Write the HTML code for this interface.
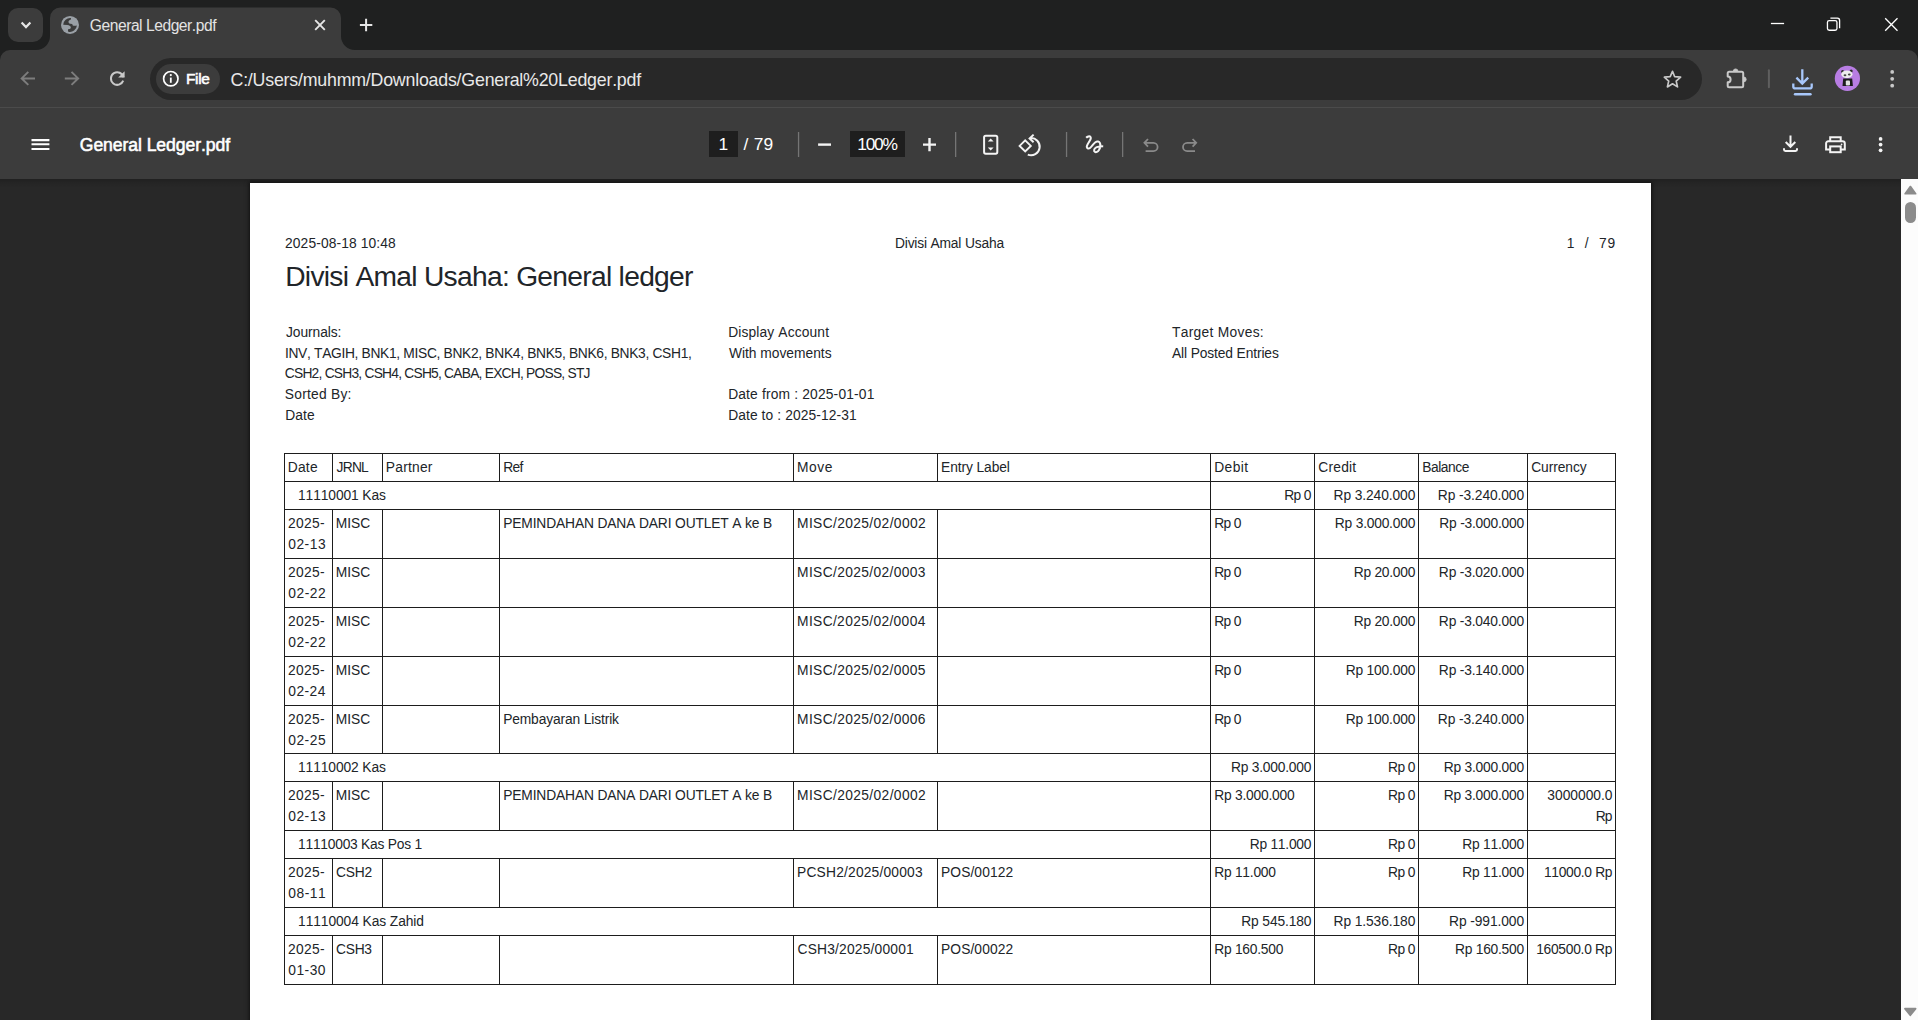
<!DOCTYPE html>
<html lang="en">
<head>
<meta charset="utf-8">
<title>General Ledger.pdf</title>
<style>
html,body{margin:0;padding:0}
body{width:1918px;height:1020px;overflow:hidden;position:relative;background:#282828;
 font-family:"Liberation Sans",sans-serif;font-kerning:none}
.a{position:absolute}
svg{position:absolute;overflow:visible}
.t{position:absolute;white-space:pre;line-height:20px;margin:0;padding:0}
.sb{-webkit-text-stroke:.55px}
#frame{left:0;top:0;width:1918px;height:60px;background:#1f2020}
#tsb{left:8px;top:8px;width:35px;height:34px;border-radius:10px;background:#3c3c3c}
#toolbar{left:0;top:50px;width:1918px;height:58px;background:#3c3c3c;border-radius:10px 10px 0 0}
#omni{left:150px;top:58px;width:1552px;height:42px;border-radius:21px;background:#282828}
#chip{left:156px;top:64px;width:64px;height:30px;border-radius:15px;background:#3c3c3c}
#sep1{left:0;top:107px;width:1918px;height:1px;background:#4b4b4b}
#pdfbar{left:0;top:108px;width:1918px;height:71px;background:#3c3c3c}
#shade{left:0;top:0;width:1901px;height:9px;background:linear-gradient(rgba(0,0,0,.2),rgba(0,0,0,.08) 45%,rgba(0,0,0,0))}
#view{left:0;top:179px;width:1918px;height:841px;background:#282828;overflow:hidden}
#page{left:250px;top:4px;width:1401px;height:900px;background:#fff;box-shadow:0 0 4px 1px rgba(0,0,0,.6)}
#sbar{left:1901px;top:179px;width:17px;height:841px;background:#fcfcfc}
#thumb{left:1905px;top:202px;width:11px;height:21px;border-radius:5.5px;background:#8b8b8b}
.gl{position:absolute;background:#1d1d1d}
</style>
</head>
<body>
<div class="a" id="frame"></div>
<div class="a" id="tsb"></div>
<svg class="a" style="left:0;top:0" width="400" height="52"><path d="M36 50 A14 14 0 0 0 50 36 L50 18 A10.5 10.5 0 0 1 60.5 7.5 L330.5 7.5 A10.5 10.5 0 0 1 341 18 L341 36 A14 14 0 0 0 355 50 L355 52 L36 52 Z" fill="#3c3c3c"/></svg>
<div class="a" id="toolbar"></div>
<div class="a" id="omni"></div>
<div class="a" id="chip"></div>
<div class="a" id="sep1"></div>
<div class="a" id="view"><div class="a" id="shade"></div><div class="a" id="page"></div></div>
<div class="a" id="pdfbar"></div>
<div class="a" id="sbar"></div>
<div class="a" id="thumb"></div>
<svg class="a" style="left:0;top:0" width="1918" height="180" fill="none" stroke-linecap="butt" stroke-linejoin="miter">
<!-- tab search chevron -->
<path d="M21.6 22.6 L26 27.1 L30.4 22.6" stroke="#e6e6e6" stroke-width="2.2"/>
<!-- favicon globe -->
<circle cx="70" cy="24.9" r="9" fill="#9aa0a6"/>
<path d="M63.2 24.7 A7 7 0 0 1 70.9 17.95 L71 19.4 C69.8 19.8 68.9 20.4 68.6 21.2 C68.2 22.4 68.8 23.4 70.3 23.8 L72.1 24.1 C72.6 24.4 72.4 25 72.8 25.4 C73.6 26 75.6 26 76.9 25.4 A7 7 0 0 1 68.3 31.7 C67.8 30.8 67.8 29.8 68.3 29.2 C68.9 28.6 70 29 70.5 28.4 C71.1 27.6 70.9 26.6 70 25.9 C69.2 25.2 68.4 25 67.4 24.9 Z" fill="#3c3c3c"/>
<!-- tab close -->
<path d="M315.2 20.2 L324.8 29.8 M324.8 20.2 L315.2 29.8" stroke="#e6e6e6" stroke-width="1.9"/>
<!-- new tab -->
<path d="M359.9 25 H372.3 M366.1 18.8 V31.2" stroke="#e6e6e6" stroke-width="2"/>
<!-- window controls -->
<path d="M1770.9 23.5 H1784.1" stroke="#ffffff" stroke-width="1.3"/>
<rect x="1827.45" y="20.55" width="9.5" height="9.7" rx="1.8" stroke="#ffffff" stroke-width="1.3"/>
<path d="M1830.4 18.2 H1837.4 A2.2 2.2 0 0 1 1839.6 20.4 V28.2" stroke="#ffffff" stroke-width="1.3"/>
<path d="M1885.2 18.2 L1897.5 30.7 M1897.5 18.2 L1885.2 30.7" stroke="#ffffff" stroke-width="1.3"/>
<!-- nav back / forward / reload -->
<path d="M35 78.4 H22 M28.3 71.9 L21.7 78.4 L28.3 84.9" stroke="#7d7d7d" stroke-width="2"/>
<path d="M64.8 78.4 H77.8 M71.5 71.9 L78.1 78.4 L71.5 84.9" stroke="#7d7d7d" stroke-width="2"/>
<path d="M123.4 77.2 A6.3 6.3 0 1 0 123.2 80.6" stroke="#c9c9c9" stroke-width="2"/>
<path d="M124.6 71.2 V77.6 H118.2 Z" fill="#c9c9c9"/>
<!-- info chip icon -->
<circle cx="170.8" cy="78.7" r="7.2" stroke="#ffffff" stroke-width="1.7"/>
<path d="M170.8 77.6 V82.8" stroke="#ffffff" stroke-width="1.8"/>
<circle cx="170.8" cy="75.1" r="1.1" fill="#ffffff"/>
<!-- star -->
<path d="M1672.5 71.3 L1674.7 76.7 L1680.6 77.2 L1676.2 81.1 L1677.5 86.9 L1672.5 83.8 L1667.4 86.9 L1668.7 81.1 L1664.3 77.2 L1670.2 76.7 Z" stroke="#c9c9c9" stroke-width="1.7" stroke-linejoin="round"/>
<!-- extensions puzzle -->
<path d="M1727.7 76.5 V73.2 A1.5 1.5 0 0 1 1729.2 71.7 H1741.7 A1.5 1.5 0 0 1 1743.2 73.2 V85.7 A1.5 1.5 0 0 1 1741.7 87.2 H1729.2 A1.5 1.5 0 0 1 1727.7 85.7 V82.3 A2.9 2.9 0 0 0 1727.7 76.5 Z" stroke="#c9c9c9" stroke-width="2" stroke-linejoin="round"/>
<path d="M1733.3 71.2 A2.3 2.3 0 0 1 1737.9 71.2 Z" fill="#c9c9c9" stroke="#c9c9c9" stroke-width="0.8"/>
<path d="M1743.8 77 A2.4 2.4 0 0 1 1743.8 81.8 Z" fill="#c9c9c9" stroke="#c9c9c9" stroke-width="0.8"/>
<!-- separator -->
<rect x="1767.9" y="69.3" width="2" height="19" rx="1" fill="#5f5f5f"/>
<!-- download (blue) -->
<path d="M1802.3 69.3 V82.6 M1796.4 77.6 L1802.3 83.5 L1808.2 77.6" stroke="#a8c7fa" stroke-width="2.3"/>
<path d="M1793.3 83.4 V86.4 A2 2 0 0 0 1795.3 88.4 H1809.7 A2 2 0 0 0 1811.7 86.4 V83.4" stroke="#a8c7fa" stroke-width="2.3"/>
<rect x="1793.8" y="93" width="17.9" height="2.6" rx="1.3" fill="#a8c7fa"/>
<!-- avatar -->
<circle cx="1847.4" cy="78.4" r="12.6" fill="#b87de3"/>
<circle cx="1842.6" cy="71.6" r="1.5" fill="#2a2a2a"/><circle cx="1851.2" cy="71" r="1.5" fill="#2a2a2a"/>
<ellipse cx="1846.9" cy="74.3" rx="5.6" ry="3.9" fill="#ededed"/>
<ellipse cx="1845" cy="75.3" rx="1.4" ry="1" fill="#444"/><ellipse cx="1849.3" cy="74.4" rx="1.4" ry="1" fill="#444"/>
<path d="M1843.2 78.6 H1852.2 L1852.9 85.9 H1842.5 Z" fill="#1c1c1c"/>
<rect x="1845.8" y="80.4" width="4.2" height="5.2" rx="1" fill="#e2e2e2"/>
<!-- chrome menu dots -->
<circle cx="1892.2" cy="71.9" r="1.9" fill="#c9c9c9"/><circle cx="1892.2" cy="78.8" r="1.9" fill="#c9c9c9"/><circle cx="1892.2" cy="85.7" r="1.9" fill="#c9c9c9"/>

<!-- ===== PDF toolbar ===== -->
<path d="M31.5 140.1 H49.4 M31.5 144.3 H49.4 M31.5 149 H49.4" stroke="#ffffff" stroke-width="2.1"/>
<rect x="709" y="131" width="29" height="26" fill="#1e1e1e"/>
<rect x="850" y="131" width="55" height="26" fill="#1e1e1e"/>
<rect x="797.9" y="132" width="1.3" height="25" fill="#757575"/>
<rect x="955" y="132" width="1.3" height="25" fill="#757575"/>
<rect x="1065.9" y="132" width="1.3" height="25" fill="#757575"/>
<rect x="1122" y="132" width="1.3" height="25" fill="#757575"/>
<path d="M818.1 144.6 H831" stroke="#f4f4f4" stroke-width="2.4"/>
<path d="M923 144.6 H936 M929.5 138 V151.2" stroke="#f4f4f4" stroke-width="2.4"/>
<!-- fit to page -->
<rect x="984.1" y="135.7" width="13.2" height="18" rx="1.6" stroke="#f4f4f4" stroke-width="2"/>
<path d="M990.7 138.4 L993.6 141.6 H987.8 Z M990.7 150.6 L993.6 147.4 H987.8 Z" fill="#f4f4f4"/>
<!-- rotate ccw -->
<path d="M1030.2 138.1 A8.6 8.6 0 1 1 1027.8 154.6" stroke="#f4f4f4" stroke-width="2"/>
<path d="M1033.6 134.6 L1029.6 138.4 L1033.6 142.2" stroke="#f4f4f4" stroke-width="2"/>
<path d="M1025.2 140.3 L1030.8 145.9 L1025.2 151.5 L1019.6 145.9 Z" stroke="#f4f4f4" stroke-width="1.9"/>
<!-- draw / annotate squiggle -->
<path d="M1086.2 137.8 C1087.3 136.6 1089.4 135.8 1090.4 136.8 C1091.4 137.9 1090.5 139.6 1089.6 141 C1088.3 143.2 1086.4 145.6 1086.8 147 C1087.2 148.6 1088.6 149 1090 148 C1092 146.6 1093.2 143.8 1095.4 142.2 C1097.2 140.9 1099.2 141.4 1100 143.2 C1100.8 145.2 1100.3 148 1099 150 C1097.8 151.8 1096 152.8 1094.8 151.8 C1093.6 150.8 1094 148.9 1095.6 147.8 C1097.4 146.5 1100 146.2 1103.2 146.2" stroke="#f4f4f4" stroke-width="2" stroke-linecap="butt" stroke-linejoin="round"/>
<!-- undo / redo (disabled) -->
<path d="M1148 139 L1144.4 142.8 L1148 146.6 M1144.6 142.8 H1153.4 A4.2 4.2 0 0 1 1153.4 151.2 H1145.6" stroke="#8a8a8a" stroke-width="1.8"/>
<path d="M1192.6 139 L1196.2 142.8 L1192.6 146.6 M1196 142.8 H1187.2 A4.2 4.2 0 0 0 1187.2 151.2 H1195" stroke="#8a8a8a" stroke-width="1.8"/>
<!-- download -->
<path d="M1790.5 135.6 V146.6 M1785.7 142 L1790.5 146.8 L1795.3 142" stroke="#f4f4f4" stroke-width="2"/>
<path d="M1784 148.2 V149.6 A1.4 1.4 0 0 0 1785.4 151 H1795.6 A1.4 1.4 0 0 0 1797 149.6 V148.2" stroke="#f4f4f4" stroke-width="2"/>
<!-- print -->
<path d="M1830.2 141.2 V137.2 H1840.7 V141.2" stroke="#f4f4f4" stroke-width="2"/>
<path d="M1830.2 149.6 H1826.1 V143.4 A2.2 2.2 0 0 1 1828.3 141.2 H1842.6 A2.2 2.2 0 0 1 1844.8 143.4 V149.6 H1840.7" stroke="#f4f4f4" stroke-width="2"/>
<rect x="1830.2" y="146.4" width="10.5" height="5.8" stroke="#f4f4f4" stroke-width="2"/>
<circle cx="1841.6" cy="144.3" r="0.9" fill="#f4f4f4"/>
<!-- pdf menu dots -->
<circle cx="1880.6" cy="138.9" r="1.85" fill="#f4f4f4"/><circle cx="1880.6" cy="144.6" r="1.85" fill="#f4f4f4"/><circle cx="1880.6" cy="150.3" r="1.85" fill="#f4f4f4"/>
</svg>
<svg class="a" style="left:1901px;top:179px" width="17" height="841">
<path d="M9.4 7.6 L14.6 14.7 H4.2 Z" fill="#8b8b8b" stroke="#8b8b8b" stroke-width="1.8" stroke-linejoin="round"/>
<path d="M9.3 836.2 L14.6 829.6 H4 Z" fill="#8b8b8b" stroke="#8b8b8b" stroke-width="1.8" stroke-linejoin="round"/>
</svg>

<div class="gl" style="left:284px;top:453px;width:1332px;height:1px"></div>
<div class="gl" style="left:284px;top:481px;width:1332px;height:1px"></div>
<div class="gl" style="left:284px;top:509px;width:1332px;height:1px"></div>
<div class="gl" style="left:284px;top:558px;width:1332px;height:1px"></div>
<div class="gl" style="left:284px;top:607px;width:1332px;height:1px"></div>
<div class="gl" style="left:284px;top:656px;width:1332px;height:1px"></div>
<div class="gl" style="left:284px;top:705px;width:1332px;height:1px"></div>
<div class="gl" style="left:284px;top:753px;width:1332px;height:1px"></div>
<div class="gl" style="left:284px;top:781px;width:1332px;height:1px"></div>
<div class="gl" style="left:284px;top:830px;width:1332px;height:1px"></div>
<div class="gl" style="left:284px;top:858px;width:1332px;height:1px"></div>
<div class="gl" style="left:284px;top:907px;width:1332px;height:1px"></div>
<div class="gl" style="left:284px;top:935px;width:1332px;height:1px"></div>
<div class="gl" style="left:284px;top:984px;width:1332px;height:1px"></div>
<div class="gl" style="left:284px;top:453px;width:1px;height:29px"></div>
<div class="gl" style="left:332px;top:453px;width:1px;height:29px"></div>
<div class="gl" style="left:382px;top:453px;width:1px;height:29px"></div>
<div class="gl" style="left:499px;top:453px;width:1px;height:29px"></div>
<div class="gl" style="left:793px;top:453px;width:1px;height:29px"></div>
<div class="gl" style="left:937px;top:453px;width:1px;height:29px"></div>
<div class="gl" style="left:1210px;top:453px;width:1px;height:29px"></div>
<div class="gl" style="left:1314px;top:453px;width:1px;height:29px"></div>
<div class="gl" style="left:1418px;top:453px;width:1px;height:29px"></div>
<div class="gl" style="left:1527px;top:453px;width:1px;height:29px"></div>
<div class="gl" style="left:1615px;top:453px;width:1px;height:29px"></div>
<div class="gl" style="left:284px;top:481px;width:1px;height:29px"></div>
<div class="gl" style="left:1210px;top:481px;width:1px;height:29px"></div>
<div class="gl" style="left:1314px;top:481px;width:1px;height:29px"></div>
<div class="gl" style="left:1418px;top:481px;width:1px;height:29px"></div>
<div class="gl" style="left:1527px;top:481px;width:1px;height:29px"></div>
<div class="gl" style="left:1615px;top:481px;width:1px;height:29px"></div>
<div class="gl" style="left:284px;top:509px;width:1px;height:50px"></div>
<div class="gl" style="left:332px;top:509px;width:1px;height:50px"></div>
<div class="gl" style="left:382px;top:509px;width:1px;height:50px"></div>
<div class="gl" style="left:499px;top:509px;width:1px;height:50px"></div>
<div class="gl" style="left:793px;top:509px;width:1px;height:50px"></div>
<div class="gl" style="left:937px;top:509px;width:1px;height:50px"></div>
<div class="gl" style="left:1210px;top:509px;width:1px;height:50px"></div>
<div class="gl" style="left:1314px;top:509px;width:1px;height:50px"></div>
<div class="gl" style="left:1418px;top:509px;width:1px;height:50px"></div>
<div class="gl" style="left:1527px;top:509px;width:1px;height:50px"></div>
<div class="gl" style="left:1615px;top:509px;width:1px;height:50px"></div>
<div class="gl" style="left:284px;top:558px;width:1px;height:50px"></div>
<div class="gl" style="left:332px;top:558px;width:1px;height:50px"></div>
<div class="gl" style="left:382px;top:558px;width:1px;height:50px"></div>
<div class="gl" style="left:499px;top:558px;width:1px;height:50px"></div>
<div class="gl" style="left:793px;top:558px;width:1px;height:50px"></div>
<div class="gl" style="left:937px;top:558px;width:1px;height:50px"></div>
<div class="gl" style="left:1210px;top:558px;width:1px;height:50px"></div>
<div class="gl" style="left:1314px;top:558px;width:1px;height:50px"></div>
<div class="gl" style="left:1418px;top:558px;width:1px;height:50px"></div>
<div class="gl" style="left:1527px;top:558px;width:1px;height:50px"></div>
<div class="gl" style="left:1615px;top:558px;width:1px;height:50px"></div>
<div class="gl" style="left:284px;top:607px;width:1px;height:50px"></div>
<div class="gl" style="left:332px;top:607px;width:1px;height:50px"></div>
<div class="gl" style="left:382px;top:607px;width:1px;height:50px"></div>
<div class="gl" style="left:499px;top:607px;width:1px;height:50px"></div>
<div class="gl" style="left:793px;top:607px;width:1px;height:50px"></div>
<div class="gl" style="left:937px;top:607px;width:1px;height:50px"></div>
<div class="gl" style="left:1210px;top:607px;width:1px;height:50px"></div>
<div class="gl" style="left:1314px;top:607px;width:1px;height:50px"></div>
<div class="gl" style="left:1418px;top:607px;width:1px;height:50px"></div>
<div class="gl" style="left:1527px;top:607px;width:1px;height:50px"></div>
<div class="gl" style="left:1615px;top:607px;width:1px;height:50px"></div>
<div class="gl" style="left:284px;top:656px;width:1px;height:50px"></div>
<div class="gl" style="left:332px;top:656px;width:1px;height:50px"></div>
<div class="gl" style="left:382px;top:656px;width:1px;height:50px"></div>
<div class="gl" style="left:499px;top:656px;width:1px;height:50px"></div>
<div class="gl" style="left:793px;top:656px;width:1px;height:50px"></div>
<div class="gl" style="left:937px;top:656px;width:1px;height:50px"></div>
<div class="gl" style="left:1210px;top:656px;width:1px;height:50px"></div>
<div class="gl" style="left:1314px;top:656px;width:1px;height:50px"></div>
<div class="gl" style="left:1418px;top:656px;width:1px;height:50px"></div>
<div class="gl" style="left:1527px;top:656px;width:1px;height:50px"></div>
<div class="gl" style="left:1615px;top:656px;width:1px;height:50px"></div>
<div class="gl" style="left:284px;top:705px;width:1px;height:49px"></div>
<div class="gl" style="left:332px;top:705px;width:1px;height:49px"></div>
<div class="gl" style="left:382px;top:705px;width:1px;height:49px"></div>
<div class="gl" style="left:499px;top:705px;width:1px;height:49px"></div>
<div class="gl" style="left:793px;top:705px;width:1px;height:49px"></div>
<div class="gl" style="left:937px;top:705px;width:1px;height:49px"></div>
<div class="gl" style="left:1210px;top:705px;width:1px;height:49px"></div>
<div class="gl" style="left:1314px;top:705px;width:1px;height:49px"></div>
<div class="gl" style="left:1418px;top:705px;width:1px;height:49px"></div>
<div class="gl" style="left:1527px;top:705px;width:1px;height:49px"></div>
<div class="gl" style="left:1615px;top:705px;width:1px;height:49px"></div>
<div class="gl" style="left:284px;top:753px;width:1px;height:29px"></div>
<div class="gl" style="left:1210px;top:753px;width:1px;height:29px"></div>
<div class="gl" style="left:1314px;top:753px;width:1px;height:29px"></div>
<div class="gl" style="left:1418px;top:753px;width:1px;height:29px"></div>
<div class="gl" style="left:1527px;top:753px;width:1px;height:29px"></div>
<div class="gl" style="left:1615px;top:753px;width:1px;height:29px"></div>
<div class="gl" style="left:284px;top:781px;width:1px;height:50px"></div>
<div class="gl" style="left:332px;top:781px;width:1px;height:50px"></div>
<div class="gl" style="left:382px;top:781px;width:1px;height:50px"></div>
<div class="gl" style="left:499px;top:781px;width:1px;height:50px"></div>
<div class="gl" style="left:793px;top:781px;width:1px;height:50px"></div>
<div class="gl" style="left:937px;top:781px;width:1px;height:50px"></div>
<div class="gl" style="left:1210px;top:781px;width:1px;height:50px"></div>
<div class="gl" style="left:1314px;top:781px;width:1px;height:50px"></div>
<div class="gl" style="left:1418px;top:781px;width:1px;height:50px"></div>
<div class="gl" style="left:1527px;top:781px;width:1px;height:50px"></div>
<div class="gl" style="left:1615px;top:781px;width:1px;height:50px"></div>
<div class="gl" style="left:284px;top:830px;width:1px;height:29px"></div>
<div class="gl" style="left:1210px;top:830px;width:1px;height:29px"></div>
<div class="gl" style="left:1314px;top:830px;width:1px;height:29px"></div>
<div class="gl" style="left:1418px;top:830px;width:1px;height:29px"></div>
<div class="gl" style="left:1527px;top:830px;width:1px;height:29px"></div>
<div class="gl" style="left:1615px;top:830px;width:1px;height:29px"></div>
<div class="gl" style="left:284px;top:858px;width:1px;height:50px"></div>
<div class="gl" style="left:332px;top:858px;width:1px;height:50px"></div>
<div class="gl" style="left:382px;top:858px;width:1px;height:50px"></div>
<div class="gl" style="left:499px;top:858px;width:1px;height:50px"></div>
<div class="gl" style="left:793px;top:858px;width:1px;height:50px"></div>
<div class="gl" style="left:937px;top:858px;width:1px;height:50px"></div>
<div class="gl" style="left:1210px;top:858px;width:1px;height:50px"></div>
<div class="gl" style="left:1314px;top:858px;width:1px;height:50px"></div>
<div class="gl" style="left:1418px;top:858px;width:1px;height:50px"></div>
<div class="gl" style="left:1527px;top:858px;width:1px;height:50px"></div>
<div class="gl" style="left:1615px;top:858px;width:1px;height:50px"></div>
<div class="gl" style="left:284px;top:907px;width:1px;height:29px"></div>
<div class="gl" style="left:1210px;top:907px;width:1px;height:29px"></div>
<div class="gl" style="left:1314px;top:907px;width:1px;height:29px"></div>
<div class="gl" style="left:1418px;top:907px;width:1px;height:29px"></div>
<div class="gl" style="left:1527px;top:907px;width:1px;height:29px"></div>
<div class="gl" style="left:1615px;top:907px;width:1px;height:29px"></div>
<div class="gl" style="left:284px;top:935px;width:1px;height:50px"></div>
<div class="gl" style="left:332px;top:935px;width:1px;height:50px"></div>
<div class="gl" style="left:382px;top:935px;width:1px;height:50px"></div>
<div class="gl" style="left:499px;top:935px;width:1px;height:50px"></div>
<div class="gl" style="left:793px;top:935px;width:1px;height:50px"></div>
<div class="gl" style="left:937px;top:935px;width:1px;height:50px"></div>
<div class="gl" style="left:1210px;top:935px;width:1px;height:50px"></div>
<div class="gl" style="left:1314px;top:935px;width:1px;height:50px"></div>
<div class="gl" style="left:1418px;top:935px;width:1px;height:50px"></div>
<div class="gl" style="left:1527px;top:935px;width:1px;height:50px"></div>
<div class="gl" style="left:1615px;top:935px;width:1px;height:50px"></div>
<span class="t" style="left:285.06px;top:234.00px;font-size:13.8px;color:#212529;letter-spacing:0.114px">2025-08-18 10:48</span>
<span class="t" style="left:894.97px;top:234.00px;font-size:13.8px;color:#212529;letter-spacing:-0.176px">Divisi Amal Usaha</span>
<span class="t" style="left:1566.72px;top:234.00px;font-size:13.8px;color:#212529">1</span>
<span class="t" style="left:1584.78px;top:234.00px;font-size:13.8px;color:#212529">/</span>
<span class="t" style="left:1598.99px;top:234.00px;font-size:13.8px;color:#212529;letter-spacing:0.902px">79</span>
<span class="t" style="left:285.19px;top:266.00px;font-size:28.2px;color:#212529;letter-spacing:-0.705px">Divisi Amal Usaha: General ledger</span>
<span class="t" style="left:286.04px;top:323.00px;font-size:13.8px;color:#212529;letter-spacing:-0.071px">Journals:</span>
<span class="t" style="left:284.98px;top:344.00px;font-size:13.8px;color:#212529;letter-spacing:-0.322px">INV, TAGIH, BNK1, MISC, BNK2, BNK4, BNK5, BNK6, BNK3, CSH1,</span>
<span class="t" style="left:284.80px;top:364.00px;font-size:13.8px;color:#212529;letter-spacing:-0.773px">CSH2, CSH3, CSH4, CSH5, CABA, EXCH, POSS, STJ</span>
<span class="t" style="left:284.87px;top:385.00px;font-size:13.8px;color:#212529;letter-spacing:0.229px">Sorted By:</span>
<span class="t" style="left:285.13px;top:406.00px;font-size:13.8px;color:#212529;letter-spacing:0.176px">Date</span>
<span class="t" style="left:728.13px;top:323.00px;font-size:13.8px;color:#212529;letter-spacing:0.138px">Display Account</span>
<span class="t" style="left:728.94px;top:344.00px;font-size:13.8px;color:#212529;letter-spacing:-0.007px">With movements</span>
<span class="t" style="left:728.13px;top:385.00px;font-size:13.8px;color:#212529;letter-spacing:0.171px">Date from : 2025-01-01</span>
<span class="t" style="left:728.13px;top:406.00px;font-size:13.8px;color:#212529;letter-spacing:0.104px">Date to : 2025-12-31</span>
<span class="t" style="left:1172.09px;top:323.00px;font-size:13.8px;color:#212529;letter-spacing:0.282px">Target Moves:</span>
<span class="t" style="left:1171.97px;top:344.00px;font-size:13.8px;color:#212529;letter-spacing:-0.122px">All Posted Entries</span>
<span class="t" style="left:287.67px;top:458.00px;font-size:13.8px;color:#212529;letter-spacing:0.280px">Date</span>
<span class="t" style="left:336.58px;top:458.00px;font-size:13.8px;color:#212529;letter-spacing:-0.775px">JRNL</span>
<span class="t" style="left:385.87px;top:458.00px;font-size:13.8px;color:#212529;letter-spacing:0.219px">Partner</span>
<span class="t" style="left:503.17px;top:458.00px;font-size:13.8px;color:#212529;letter-spacing:-0.686px">Ref</span>
<span class="t" style="left:797.07px;top:458.00px;font-size:13.8px;color:#212529;letter-spacing:0.548px">Move</span>
<span class="t" style="left:941.07px;top:458.00px;font-size:13.8px;color:#212529;letter-spacing:-0.094px">Entry Label</span>
<span class="t" style="left:1214.17px;top:458.00px;font-size:13.8px;color:#212529;letter-spacing:0.416px">Debit</span>
<span class="t" style="left:1318.20px;top:458.00px;font-size:13.8px;color:#212529;letter-spacing:0.238px">Credit</span>
<span class="t" style="left:1422.27px;top:458.00px;font-size:13.8px;color:#212529;letter-spacing:-0.452px">Balance</span>
<span class="t" style="left:1531.20px;top:458.00px;font-size:13.8px;color:#212529;letter-spacing:-0.065px">Currency</span>
<span class="t" style="left:298.05px;top:486.00px;font-size:13.8px;color:#212529;letter-spacing:-0.105px">11110001 Kas</span>
<span class="t" style="left:1284.17px;top:486.00px;font-size:13.8px;color:#212529;letter-spacing:-0.628px">Rp 0</span>
<span class="t" style="left:1333.57px;top:486.00px;font-size:13.8px;color:#212529;letter-spacing:-0.099px">Rp 3.240.000</span>
<span class="t" style="left:1437.87px;top:486.00px;font-size:13.8px;color:#212529;letter-spacing:-0.099px">Rp -3.240.000</span>
<span class="t" style="left:288.11px;top:514.00px;font-size:13.8px;color:#212529;letter-spacing:0.278px">2025-</span>
<span class="t" style="left:288.26px;top:535.00px;font-size:13.8px;color:#212529;letter-spacing:0.512px">02-13</span>
<span class="t" style="left:335.67px;top:514.00px;font-size:13.8px;color:#212529;letter-spacing:0.053px">MISC</span>
<span class="t" style="left:503.17px;top:514.00px;font-size:13.8px;color:#212529;letter-spacing:-0.138px">PEMINDAHAN DANA DARI OUTLET A ke B</span>
<span class="t" style="left:797.07px;top:514.00px;font-size:13.8px;color:#212529;letter-spacing:0.365px">MISC/2025/02/0002</span>
<span class="t" style="left:1214.17px;top:514.00px;font-size:13.8px;color:#212529;letter-spacing:-0.628px">Rp 0</span>
<span class="t" style="left:1334.87px;top:514.00px;font-size:13.8px;color:#212529;letter-spacing:-0.217px">Rp 3.000.000</span>
<span class="t" style="left:1439.37px;top:514.00px;font-size:13.8px;color:#212529;letter-spacing:-0.224px">Rp -3.000.000</span>
<span class="t" style="left:288.11px;top:563.00px;font-size:13.8px;color:#212529;letter-spacing:0.278px">2025-</span>
<span class="t" style="left:288.26px;top:584.00px;font-size:13.8px;color:#212529;letter-spacing:0.534px">02-22</span>
<span class="t" style="left:335.67px;top:563.00px;font-size:13.8px;color:#212529;letter-spacing:0.053px">MISC</span>
<span class="t" style="left:797.07px;top:563.00px;font-size:13.8px;color:#212529;letter-spacing:0.360px">MISC/2025/02/0003</span>
<span class="t" style="left:1214.17px;top:563.00px;font-size:13.8px;color:#212529;letter-spacing:-0.628px">Rp 0</span>
<span class="t" style="left:1353.77px;top:563.00px;font-size:13.8px;color:#212529;letter-spacing:-0.263px">Rp 20.000</span>
<span class="t" style="left:1438.87px;top:563.00px;font-size:13.8px;color:#212529;letter-spacing:-0.182px">Rp -3.020.000</span>
<span class="t" style="left:288.11px;top:612.00px;font-size:13.8px;color:#212529;letter-spacing:0.278px">2025-</span>
<span class="t" style="left:288.26px;top:633.00px;font-size:13.8px;color:#212529;letter-spacing:0.534px">02-22</span>
<span class="t" style="left:335.67px;top:612.00px;font-size:13.8px;color:#212529;letter-spacing:0.053px">MISC</span>
<span class="t" style="left:797.07px;top:612.00px;font-size:13.8px;color:#212529;letter-spacing:0.347px">MISC/2025/02/0004</span>
<span class="t" style="left:1214.17px;top:612.00px;font-size:13.8px;color:#212529;letter-spacing:-0.628px">Rp 0</span>
<span class="t" style="left:1353.77px;top:612.00px;font-size:13.8px;color:#212529;letter-spacing:-0.263px">Rp 20.000</span>
<span class="t" style="left:1438.87px;top:612.00px;font-size:13.8px;color:#212529;letter-spacing:-0.182px">Rp -3.040.000</span>
<span class="t" style="left:288.11px;top:661.00px;font-size:13.8px;color:#212529;letter-spacing:0.278px">2025-</span>
<span class="t" style="left:288.26px;top:682.00px;font-size:13.8px;color:#212529;letter-spacing:0.462px">02-24</span>
<span class="t" style="left:335.67px;top:661.00px;font-size:13.8px;color:#212529;letter-spacing:0.053px">MISC</span>
<span class="t" style="left:797.07px;top:661.00px;font-size:13.8px;color:#212529;letter-spacing:0.358px">MISC/2025/02/0005</span>
<span class="t" style="left:1214.17px;top:661.00px;font-size:13.8px;color:#212529;letter-spacing:-0.628px">Rp 0</span>
<span class="t" style="left:1345.67px;top:661.00px;font-size:13.8px;color:#212529;letter-spacing:-0.186px">Rp 100.000</span>
<span class="t" style="left:1438.87px;top:661.00px;font-size:13.8px;color:#212529;letter-spacing:-0.182px">Rp -3.140.000</span>
<span class="t" style="left:288.11px;top:710.00px;font-size:13.8px;color:#212529;letter-spacing:0.278px">2025-</span>
<span class="t" style="left:288.26px;top:731.00px;font-size:13.8px;color:#212529;letter-spacing:0.505px">02-25</span>
<span class="t" style="left:335.67px;top:710.00px;font-size:13.8px;color:#212529;letter-spacing:0.053px">MISC</span>
<span class="t" style="left:503.17px;top:710.00px;font-size:13.8px;color:#212529;letter-spacing:-0.134px">Pembayaran Listrik</span>
<span class="t" style="left:797.07px;top:710.00px;font-size:13.8px;color:#212529;letter-spacing:0.360px">MISC/2025/02/0006</span>
<span class="t" style="left:1214.17px;top:710.00px;font-size:13.8px;color:#212529;letter-spacing:-0.628px">Rp 0</span>
<span class="t" style="left:1345.67px;top:710.00px;font-size:13.8px;color:#212529;letter-spacing:-0.186px">Rp 100.000</span>
<span class="t" style="left:1437.87px;top:710.00px;font-size:13.8px;color:#212529;letter-spacing:-0.099px">Rp -3.240.000</span>
<span class="t" style="left:298.05px;top:758.00px;font-size:13.8px;color:#212529;letter-spacing:-0.105px">11110002 Kas</span>
<span class="t" style="left:1230.97px;top:758.00px;font-size:13.8px;color:#212529;letter-spacing:-0.217px">Rp 3.000.000</span>
<span class="t" style="left:1388.07px;top:758.00px;font-size:13.8px;color:#212529;letter-spacing:-0.628px">Rp 0</span>
<span class="t" style="left:1443.67px;top:758.00px;font-size:13.8px;color:#212529;letter-spacing:-0.217px">Rp 3.000.000</span>
<span class="t" style="left:288.11px;top:786.00px;font-size:13.8px;color:#212529;letter-spacing:0.278px">2025-</span>
<span class="t" style="left:288.26px;top:807.00px;font-size:13.8px;color:#212529;letter-spacing:0.512px">02-13</span>
<span class="t" style="left:335.67px;top:786.00px;font-size:13.8px;color:#212529;letter-spacing:0.053px">MISC</span>
<span class="t" style="left:503.17px;top:786.00px;font-size:13.8px;color:#212529;letter-spacing:-0.138px">PEMINDAHAN DANA DARI OUTLET A ke B</span>
<span class="t" style="left:797.07px;top:786.00px;font-size:13.8px;color:#212529;letter-spacing:0.365px">MISC/2025/02/0002</span>
<span class="t" style="left:1214.17px;top:786.00px;font-size:13.8px;color:#212529;letter-spacing:-0.217px">Rp 3.000.000</span>
<span class="t" style="left:1388.07px;top:786.00px;font-size:13.8px;color:#212529;letter-spacing:-0.628px">Rp 0</span>
<span class="t" style="left:1443.67px;top:786.00px;font-size:13.8px;color:#212529;letter-spacing:-0.217px">Rp 3.000.000</span>
<span class="t" style="left:1547.37px;top:786.00px;font-size:13.8px;color:#212529;letter-spacing:-0.019px">3000000.0</span>
<span class="t" style="left:1595.87px;top:807.00px;font-size:13.8px;color:#212529;letter-spacing:-1.029px">Rp</span>
<span class="t" style="left:298.05px;top:835.00px;font-size:13.8px;color:#212529;letter-spacing:-0.240px">11110003 Kas Pos 1</span>
<span class="t" style="left:1249.67px;top:835.00px;font-size:13.8px;color:#212529;letter-spacing:-0.238px">Rp 11.000</span>
<span class="t" style="left:1388.07px;top:835.00px;font-size:13.8px;color:#212529;letter-spacing:-0.628px">Rp 0</span>
<span class="t" style="left:1462.37px;top:835.00px;font-size:13.8px;color:#212529;letter-spacing:-0.238px">Rp 11.000</span>
<span class="t" style="left:288.11px;top:863.00px;font-size:13.8px;color:#212529;letter-spacing:0.278px">2025-</span>
<span class="t" style="left:288.26px;top:884.00px;font-size:13.8px;color:#212529;letter-spacing:0.529px">08-11</span>
<span class="t" style="left:336.10px;top:863.00px;font-size:13.8px;color:#212529;letter-spacing:-0.273px">CSH2</span>
<span class="t" style="left:797.07px;top:863.00px;font-size:13.8px;color:#212529;letter-spacing:0.187px">PCSH2/2025/00003</span>
<span class="t" style="left:941.07px;top:863.00px;font-size:13.8px;color:#212529;letter-spacing:0.085px">POS/00122</span>
<span class="t" style="left:1214.17px;top:863.00px;font-size:13.8px;color:#212529;letter-spacing:-0.238px">Rp 11.000</span>
<span class="t" style="left:1388.07px;top:863.00px;font-size:13.8px;color:#212529;letter-spacing:-0.628px">Rp 0</span>
<span class="t" style="left:1462.37px;top:863.00px;font-size:13.8px;color:#212529;letter-spacing:-0.238px">Rp 11.000</span>
<span class="t" style="left:1543.95px;top:863.00px;font-size:13.8px;color:#212529;letter-spacing:-0.313px">11000.0 Rp</span>
<span class="t" style="left:298.05px;top:912.00px;font-size:13.8px;color:#212529;letter-spacing:-0.083px">11110004 Kas Zahid</span>
<span class="t" style="left:1241.27px;top:912.00px;font-size:13.8px;color:#212529;letter-spacing:-0.130px">Rp 545.180</span>
<span class="t" style="left:1333.57px;top:912.00px;font-size:13.8px;color:#212529;letter-spacing:-0.099px">Rp 1.536.180</span>
<span class="t" style="left:1449.07px;top:912.00px;font-size:13.8px;color:#212529;letter-spacing:-0.087px">Rp -991.000</span>
<span class="t" style="left:288.11px;top:940.00px;font-size:13.8px;color:#212529;letter-spacing:0.278px">2025-</span>
<span class="t" style="left:288.26px;top:961.00px;font-size:13.8px;color:#212529;letter-spacing:0.495px">01-30</span>
<span class="t" style="left:336.10px;top:940.00px;font-size:13.8px;color:#212529;letter-spacing:-0.302px">CSH3</span>
<span class="t" style="left:797.50px;top:940.00px;font-size:13.8px;color:#212529;letter-spacing:0.196px">CSH3/2025/00001</span>
<span class="t" style="left:941.07px;top:940.00px;font-size:13.8px;color:#212529;letter-spacing:0.085px">POS/00022</span>
<span class="t" style="left:1214.17px;top:940.00px;font-size:13.8px;color:#212529;letter-spacing:-0.241px">Rp 160.500</span>
<span class="t" style="left:1388.07px;top:940.00px;font-size:13.8px;color:#212529;letter-spacing:-0.628px">Rp 0</span>
<span class="t" style="left:1454.97px;top:940.00px;font-size:13.8px;color:#212529;letter-spacing:-0.241px">Rp 160.500</span>
<span class="t" style="left:1536.15px;top:940.00px;font-size:13.8px;color:#212529;letter-spacing:-0.268px">160500.0 Rp</span>
<span class="t" style="left:89.82px;top:16.00px;font-size:15.6px;color:#e3e3e3;letter-spacing:-0.454px">General Ledger.pdf</span>
<span class="t sb" style="left:185.94px;top:69.00px;font-size:15.4px;color:#ffffff;letter-spacing:-0.288px">File</span>
<span class="t" style="left:230.50px;top:70.00px;font-size:17.8px;color:#e8e8e8;letter-spacing:-0.213px">C:/Users/muhmm/Downloads/General%20Ledger.pdf</span>
<span class="t sb" style="left:79.81px;top:135.00px;font-size:17.6px;color:#ffffff;letter-spacing:-0.079px">General Ledger.pdf</span>
<span class="t" style="left:718.53px;top:134.00px;font-size:17.4px;color:#ffffff">1</span>
<span class="t" style="left:743.60px;top:134.00px;font-size:17.4px;color:#ffffff;letter-spacing:0.203px">/ 79</span>
<span class="t" style="left:857.27px;top:134.00px;font-size:17.4px;color:#ffffff;letter-spacing:-1.246px">100%</span>
</body>
</html>
